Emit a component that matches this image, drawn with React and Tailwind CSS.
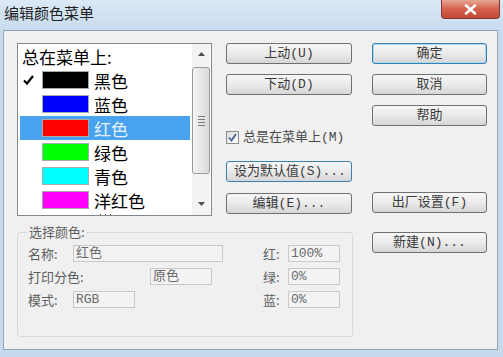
import React from 'react';

const CJK = "font-['Noto_Sans_CJK_SC',sans-serif]";
const MONO = "font-['Liberation_Mono','Noto_Sans_CJK_SC',monospace]";

const Btn = ({ children, className = '' }) => (
  <div
    className={`h-[21px] flex items-center justify-center rounded-[3px] border bg-linear-to-b from-[#f6f6f6] via-[#ebebeb] to-[#d6d6d6] text-[13px] leading-none text-[#3a3a3a] ${MONO} ${className}`}
  >
    {children}
  </div>
);

const colors = [
  { name: '黑色', hex: '#000000', checked: true },
  { name: '蓝色', hex: '#0000ff' },
  { name: '红色', hex: '#ff0000', selected: true },
  { name: '绿色', hex: '#00ff00' },
  { name: '青色', hex: '#00ffff' },
  { name: '洋红色', hex: '#ff00ff' },
];

const Field = ({ value, className = '' }) => (
  <div
    className={`h-[17px] flex items-center pl-[2px] border border-[#c9c9c9] bg-[#f3f3f3] text-[13px] leading-none text-[#6a6a6a] ${MONO} ${className}`}
  >
    {value}
  </div>
);

const Label = ({ children, className = '' }) => (
  <span className={`text-[13px] leading-none text-[#5e5e5e] ${CJK} ${className}`}>{children}</span>
);

export default function App() {
  return (
    <div className="w-[503px] h-[357px] flex flex-col bg-[#c6daee] overflow-hidden">
      {/* Title bar */}
      <div className="h-[30px] flex items-start justify-between bg-linear-to-b from-[#dce9f6] to-[#c8dbef]">
        <span className={`pl-[4px] pt-[4px] text-[15px] leading-[18px] text-[#1e1e1e] ${CJK}`}>编辑颜色菜单</span>
        <div className="mr-[3px] w-[59px] h-[19px] flex items-center justify-center rounded-b-[4px] border border-t-0 border-[#86392f] bg-linear-to-b from-[#e8a596] via-[#d4604d] to-[#c24a37]">
          <svg width="13" height="11" viewBox="0 0 13 11">
            <path d="M2 1.5 L11 9.5 M11 1.5 L2 9.5" stroke="#ffffff" strokeWidth="2.6" strokeLinecap="round" />
          </svg>
        </div>
      </div>

      {/* Client area */}
      <div className="ml-[3px] mr-[5px] h-[320px] border border-[#97a5b6] bg-[#f0f0f0] flex flex-col pl-[13px] pt-[12px]">
        {/* Top row */}
        <div className="flex items-start">
          {/* Listbox */}
          <div className="w-[195px] h-[173px] border border-[#828790] bg-white flex">
            <div className="flex-1 overflow-hidden flex flex-col">
              <div className={`h-[24px] shrink-0 flex items-center pl-[4px] text-[17px] leading-none text-black ${CJK}`}>
                总在菜单上:
              </div>
              {colors.map((c) => (
                <div
                  key={c.name}
                  className={`h-[24px] shrink-0 mx-[2px] flex items-center ${c.selected ? 'bg-[#48a2ef]' : ''}`}
                >
                  <span className="w-[22px] pl-[3px] flex items-center">
                    {c.checked && (
                      <svg width="11" height="10" viewBox="0 0 11 10">
                        <path d="M1 5.5 L4 8.5 L10 1" stroke="#000000" strokeWidth="2.2" fill="none" />
                      </svg>
                    )}
                  </span>
                  <span
                    className="w-[47px] h-[18px] border border-[#a8a8a8]"
                    style={{ backgroundColor: c.hex }}
                  />
                  <span className={`ml-[5px] text-[17px] leading-none ${c.selected ? 'text-[#eaf4ff]' : 'text-black'} ${CJK}`}>
                    {c.name}
                  </span>
                </div>
              ))}
              <div className="h-[3px] shrink-0 pl-[82px] flex items-end gap-[4px]">
                <span className="w-px h-px bg-[#555]" />
                <span className="w-px h-px bg-[#555]" />
                <span className="w-px h-px bg-[#555]" />
              </div>
            </div>
            {/* Scrollbar */}
            <div className="w-[18px] mr-[1px] flex flex-col bg-[#f3f3f3]">
              <div className="h-[20px] flex items-center justify-center">
                <svg width="7" height="4" viewBox="0 0 7 4"><path d="M0 4 L3.5 0 L7 4 Z" fill="#4d4d4d" /></svg>
              </div>
              <div className="mt-[3px] h-[107px] rounded-[3px] border border-[#9b9b9b] bg-linear-to-r from-[#f4f4f4] to-[#d9d9d9] flex flex-col items-center justify-center gap-[2px]">
                <span className="w-[7px] h-px bg-[#7a7a7a]" />
                <span className="w-[7px] h-px bg-[#7a7a7a]" />
                <span className="w-[7px] h-px bg-[#7a7a7a]" />
                <span className="w-[7px] h-px bg-[#7a7a7a]" />
              </div>
              <div className="flex-1" />
              <div className="h-[22px] flex items-center justify-center">
                <svg width="7" height="4" viewBox="0 0 7 4"><path d="M0 0 L3.5 4 L7 0 Z" fill="#4d4d4d" /></svg>
              </div>
            </div>
          </div>

          {/* Middle column */}
          <div className="ml-[14px] w-[126px] flex flex-col">
            <Btn className="border-[#707070]">上动(U)</Btn>
            <Btn className="mt-[10px] border-[#707070]">下动(D)</Btn>
            <div className="mt-[36px] h-[13px] flex items-center">
              <span className="w-[13px] h-[13px] border border-[#8e8f8f] bg-linear-to-br from-[#dcdcdc] to-[#ffffff] flex items-center justify-center">
                <svg width="9" height="9" viewBox="0 0 9 9">
                  <path d="M1 4.5 L3.5 7.5 L8 1" stroke="#4a5f97" strokeWidth="1.8" fill="none" />
                </svg>
              </span>
              <span className={`ml-[4px] text-[13px] leading-none text-[#4a4a4a] ${MONO}`}>总是在菜单上(M)</span>
            </div>
            <Btn className="mt-[17px] justify-start pl-[7px] border-[#3c7fb1] from-[#eaf6fd] via-[#d9f0fc] to-[#a7d9f5]">设为默认值(S)...</Btn>
            <Btn className="mt-[11px] border-[#707070]">编辑(E)...</Btn>
          </div>

          {/* Right column */}
          <div className="ml-[20px] w-[115px] flex flex-col">
            <Btn className="border-[#3c7fb1] shadow-[inset_0_0_0_1px_#a4d8f3]">确定</Btn>
            <Btn className="mt-[10px] border-[#707070]">取消</Btn>
            <Btn className="mt-[10px] border-[#707070]">帮助</Btn>
            <Btn className="mt-[66px] border-[#707070]">出厂设置(F)</Btn>
          </div>
        </div>

        {/* Bottom row */}
        <div className="mt-[8px] flex items-start">
          <fieldset className="w-[336px] h-[113px] m-0 border border-[#d3dbe0] rounded-[3px] pl-[10px] pr-0 pt-[5px] pb-0">
            <legend className={`px-[1px] text-[13px] leading-[16px] text-[#5e5e5e] ${CJK}`}>选择颜色:</legend>
            <div className="flex flex-col gap-[6px]">
              <div className="flex items-center">
                <Label className="w-[45px]">名称:</Label>
                <Field value="红色" className="w-[150px]" />
                <div className="w-[40px]" />
                <Label className="w-[25px]">红:</Label>
                <Field value="100%" className="w-[52px]" />
              </div>
              <div className="flex items-center">
                <Label className="w-[122px]">打印分色:</Label>
                <Field value="原色" className="w-[62px]" />
                <div className="w-[51px]" />
                <Label className="w-[25px]">绿:</Label>
                <Field value="0%" className="w-[52px]" />
              </div>
              <div className="flex items-center">
                <Label className="w-[45px]">模式:</Label>
                <Field value="RGB" className="w-[62px]" />
                <div className="w-[128px]" />
                <Label className="w-[25px]">蓝:</Label>
                <Field value="0%" className="w-[52px]" />
              </div>
            </div>
          </fieldset>
          <Btn className="ml-[19px] mt-[8px] w-[115px] border-[#707070]">新建(N)...</Btn>
        </div>
      </div>
    </div>
  );
}
